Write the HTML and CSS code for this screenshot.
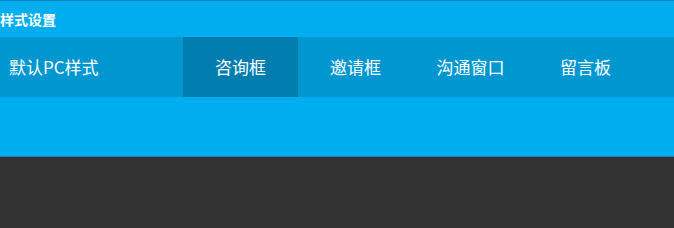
FILE: index.html
```html
<!DOCTYPE html>
<html lang="zh-CN">
<head>
    <meta charset="UTF-8">
    <title>样式设置</title>
    <link rel="stylesheet" href="styles.css">
</head>
<body>
    <!-- Style settings panel -->
    <section class="style-panel">
        <div class="panel-title">样式设置</div>
        <nav class="panel-tabs">
            <span class="tab tab-default">默认PC样式</span>
            <span class="tab active">咨询框</span>
            <span class="tab">邀请框</span>
            <span class="tab">沟通窗口</span>
            <span class="tab">留言板</span>
        </nav>
        <div class="panel-body"></div>
    </section>
</body>
</html>
```

FILE: styles.css
```css
/* Page */
body {
    margin: 0;
    background-color: #333333;
    font-family: "Microsoft YaHei", "Noto Sans CJK SC", "Noto Sans", sans-serif;
    color: #ffffff;
}

/* Panel */
.style-panel {
    background-color: #00aef0;
    border-top: 1px solid #0a86bd;
    border-bottom: 1px solid #1683b6;
}

.panel-title {
    height: 36px;
    line-height: 36px;
    padding-left: 0;
    font-size: 14px;
    font-weight: bold;
}

/* Tabs */
.panel-tabs {
    display: flex;
    height: 60px;
    background-color: #0097d0;
}

.tab {
    width: 115px;
    line-height: 60px;
    font-size: 17px;
    text-align: center;
    cursor: pointer;
}

.tab-default {
    width: 174px;
    padding-left: 9px;
    text-align: left;
}

.tab.active {
    background-color: #007dae;
}

.panel-body {
    height: 59px;
}
```
